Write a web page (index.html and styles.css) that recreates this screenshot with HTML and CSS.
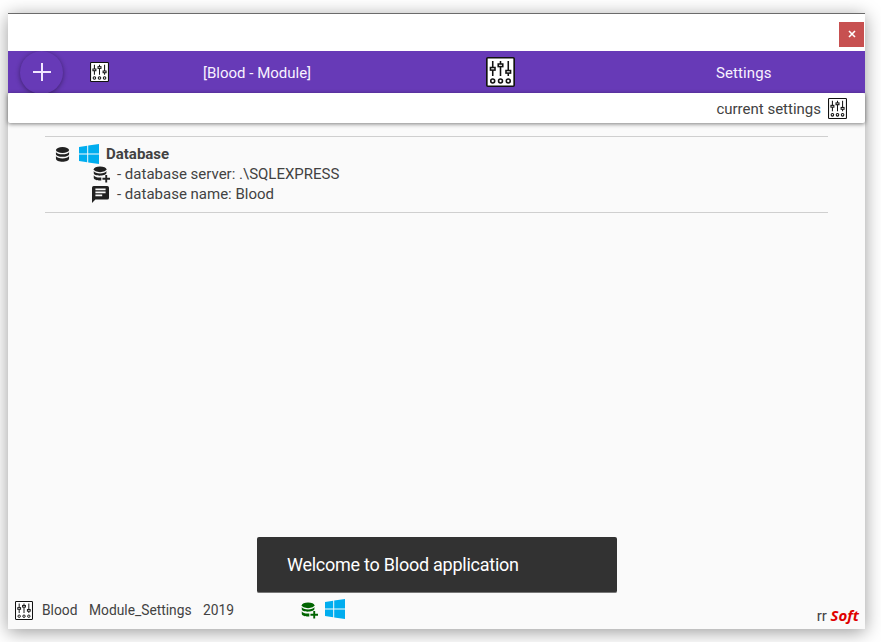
FILE: index.html
```html
<!DOCTYPE html>
<html lang="en">
<head>
<meta charset="utf-8">
<title>Blood - Module Settings</title>
<link rel="stylesheet" href="styles.css">
</head>
<body>
<svg class="defs" width="0" height="0" aria-hidden="true">
  <symbol id="mixer" viewBox="0 0 28 30" preserveAspectRatio="none">
    <rect x=".8" y=".8" width="26.4" height="28.4" rx="1" fill="#fff" stroke="#111" stroke-width="1.6"/>
    <g fill="#fff" stroke="#111" stroke-width="1.5">
      <path d="M6.5 4v15M14 4v15M21.5 4v15"/>
      <rect x="4.3" y="10.5" width="4.4" height="2.6"/>
      <rect x="11.8" y="7" width="4.4" height="2.6"/>
      <rect x="19.3" y="13.5" width="4.4" height="2.6"/>
      <circle cx="6.5" cy="24" r="1.9"/><circle cx="14" cy="24" r="1.9"/><circle cx="21.5" cy="24" r="1.9"/>
    </g>
  </symbol>
  <symbol id="database" viewBox="0 0 16 16" preserveAspectRatio="none">
    <ellipse cx="8" cy="3.2" rx="7" ry="3.2"/>
    <path d="M1 5.2c1 3.5 13 3.5 14 0v2.2c0 4-14 4-14 0zM1 9.6c1 3.5 13 3.5 14 0v2.6c0 4.6-14 4.6-14 0z"/>
  </symbol>
  <symbol id="database-plus" viewBox="0 0 18 17">
    <ellipse cx="7.5" cy="3" rx="6.7" ry="3"/>
    <path d="M.8 4.8c1 3.4 12.4 3.4 13.4 0v2.4c-1 3.3-13.4 3.5-13.4 0zM.8 9.3c1 2 4.2 2.7 8 2.4v3.2C5 15.1.8 14.3.8 12z"/>
    <path d="M13 9h2v3h3v2h-3v3h-2v-3h-3v-2h3z"/>
  </symbol>
  <symbol id="windows" viewBox="0 0 20 20" preserveAspectRatio="none">
    <path d="M0 3l8.2-1.2v7.7H0zM9.2 1.6L20 0v9.5H9.2zM0 10.5h8.2v7.7L0 17zM9.2 10.5H20V20L9.2 18.4z"/>
  </symbol>
  <symbol id="message" viewBox="2 2 20 20" preserveAspectRatio="none">
    <path fill-rule="evenodd" d="M4 2h16a2 2 0 0 1 2 2v12a2 2 0 0 1-2 2H6l-4 4V4a2 2 0 0 1 2-2zM6 5v2h12V5zM6 8.5v2h12v-2zM6 12v2h8v-2z"/>
  </symbol>
</svg>
<main class="window">
  <div class="titlebar">
    <button class="close" aria-label="Close"><svg viewBox="0 0 8 8"><path d="M1 1l6 6M7 1L1 7"/></svg></button>
  </div>
  <header class="toolbar">
    <button class="add" aria-label="Add"><svg viewBox="0 0 18 18"><path d="M9 0v18M0 9h18"/></svg></button>
    <svg class="tool-icon"><use href="#mixer"/></svg>
    <span class="module">[Blood - Module]</span>
    <svg class="tool-icon-large"><use href="#mixer"/></svg>
    <span class="section">Settings</span>
  </header>
  <div class="subbar">
    <span class="current">current settings</span>
    <svg class="sub-icon"><use href="#mixer"/></svg>
  </div>
  <section class="details">
    <div class="row heading">
      <svg class="db-icon"><use href="#database"/></svg>
      <svg class="win-icon"><use href="#windows"/></svg>
      <strong class="title">Database</strong>
    </div>
    <div class="row item">
      <svg class="item-icon plus"><use href="#database-plus"/></svg>
      <span class="server">- database server: .\SQLEXPRESS</span>
    </div>
    <div class="row item">
      <svg class="item-icon"><use href="#message"/></svg>
      <span class="name">- database name: Blood</span>
    </div>
  </section>
  <footer class="status">
    <svg class="status-icon"><use href="#mixer"/></svg>
    <span class="app">Blood</span>
    <span class="mod">Module_Settings</span>
    <span class="year">2019</span>
    <svg class="status-db"><use href="#database-plus"/></svg>
    <svg class="status-win"><use href="#windows"/></svg>
    <span class="brand">rr <b>Soft</b></span>
  </footer>
  <div class="snackbar"><span>Welcome to Blood application</span></div>
</main>
</body>
</html>
```
FILE: styles.css
```css
* { box-sizing: border-box; }
body {
  margin: 0;
  height: 642px;
  overflow: hidden;
  padding: 13px 0 0 8px;
  background: #fff;
  font: 15px/20px Roboto, sans-serif;
  color: #424242;
}
svg { display: block; flex: none; }
.defs { position: absolute; }
button { padding: 0; border: 0; }
.window {
  position: relative;
  display: flex;
  flex-direction: column;
  width: 857px;
  height: 616px;
  background: #fafafa;
  border-top: 1px solid #6b6b6b;
  box-shadow: 0 3px 17px rgba(0, 0, 0, .4);
}
.titlebar {
  display: flex;
  justify-content: flex-end;
  height: 37px;
  padding: 8px 1px 0 0;
  background: #fff;
}
.close {
  display: flex;
  align-items: center;
  justify-content: center;
  width: 25px;
  height: 25px;
  padding-bottom: 1px;
  background: #c75050;
}
.close svg { width: 8px; height: 8px; fill: none; stroke: #fff; stroke-width: 1.6; }
.toolbar {
  display: flex;
  align-items: center;
  height: 42px;
  padding-left: 12px;
  overflow: hidden;
  background: #673ab7;
  color: #f8f2ff;
}
.add {
  display: flex;
  align-items: center;
  justify-content: center;
  flex: none;
  width: 43px;
  height: 43px;
  border-radius: 50%;
  background: #673ab7;
  box-shadow: 0 1px 5px rgba(0, 0, 0, .42);
}
.add svg { width: 18px; height: 18px; stroke: #f2e7ff; stroke-width: 2; }
.tool-icon { width: 19px; height: 20px; margin-left: 27px; }
.module { width: 109px; margin: 2px 0 0 94px; white-space: nowrap; }
.tool-icon-large { width: 29px; height: 30px; margin-left: 174px; }
.section { margin: 2px 0 0 201px; letter-spacing: .1px; }
.subbar {
  display: flex;
  align-items: center;
  justify-content: flex-end;
  height: 30px;
  padding-right: 18px;
  background: #fff;
  border-radius: 2px;
  box-shadow: 0 1px 4px rgba(0, 0, 0, .5);
}
.current { margin-top: 2px; }
.sub-icon { width: 19px; height: 21px; margin-left: 7px; }
.details {
  width: 783px;
  height: 77px;
  margin: 13px 0 0 37px;
  padding: 7px 0 0 11px;
  border: solid #cfcfcf;
  border-width: 1px 0;
}
.row { display: flex; align-items: center; height: 20px; white-space: nowrap; }
.db-icon { width: 15px; height: 15px; margin-left: -1px; fill: #212121; }
.win-icon { width: 20px; height: 20px; margin-left: 9px; fill: #00adef; }
.title { margin-left: 7px; font-weight: 700; }
.item { padding-left: 36px; }
.item-icon { width: 17px; height: 17px; margin-right: 8px; fill: #212121; }
.plus { margin-left: 1px; margin-right: 7px; }
.status {
  display: flex;
  align-items: center;
  height: 40px;
  margin-top: auto;
  padding: 2px 6px 0 7px;
  font-size: 13.8px;
}
.status-icon { width: 18px; height: 19px; }
.app { width: 36px; margin-left: 9px; }
.mod { width: 103px; margin-left: 11px; }
.year { width: 32px; margin-left: 11px; }
.status-db { width: 17px; height: 17px; margin-left: 66px; fill: #006400; }
.status-win { width: 20px; height: 20px; margin: -2px 0 0 7px; fill: #00adef; }
.brand { margin: 11px 0 0 auto; font-size: 15px; }
.brand b { color: #e00000; font: italic 700 15px/20px "Open Sans", sans-serif; }
.snackbar {
  position: absolute;
  left: 249px;
  top: 523px;
  display: flex;
  align-items: center;
  width: 360px;
  height: 56px;
  padding-left: 30px;
  border-radius: 2px;
  border-bottom: 1px solid #777;
  background: #323232;
  color: #fff;
  font-size: 18px;
  letter-spacing: -.25px;
}
```
